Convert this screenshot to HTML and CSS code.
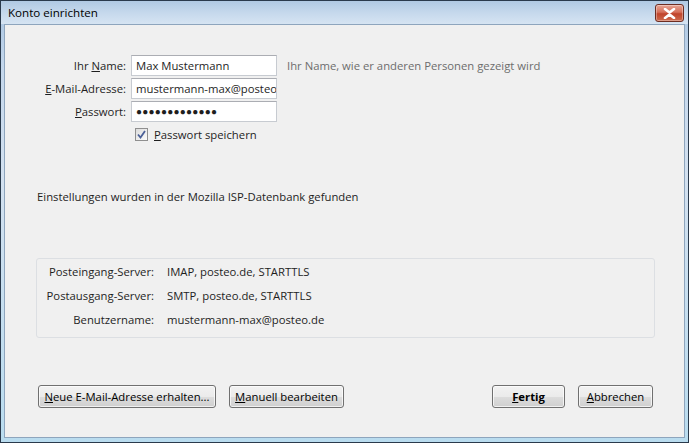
FILE: index.html
```html
<!DOCTYPE html>
<html lang="de">
<head>
<meta charset="utf-8">
<title>Konto einrichten</title>
<link rel="stylesheet" href="styles.css">
</head>
<body>
<div class="window">
  <div class="titlebar">
    <span class="title">Konto einrichten</span>
    <span class="close">
      <svg width="13" height="11" viewBox="0 0 13 11"><path d="M2 1 L6.5 4.5 L11 1 M2 10 L6.5 6.5 L11 10" stroke="#fff" stroke-width="2.6" fill="none" stroke-linecap="round"/></svg>
    </span>
  </div>
  <div class="client">
    <div class="form">
      <label class="lbl">Ihr <u>N</u>ame:</label>
      <div class="input">Max Mustermann</div>
      <span class="hint">Ihr Name, wie er anderen Personen gezeigt wird</span>

      <label class="lbl"><u>E</u>-Mail-Adresse:</label>
      <div class="input">mustermann-max@posteo.de</div>
      <span></span>

      <label class="lbl"><u>P</u>asswort:</label>
      <div class="input pw">●●●●●●●●●●●●●</div>
      <span></span>

      <span></span>
      <div class="check">
        <span class="box"><svg width="9" height="9" viewBox="0 0 9 9"><path d="M1 4.5 L3.5 7.5 L8 1" stroke="#4a5f97" stroke-width="1.8" fill="none"/></svg></span>
        <span><u>P</u>asswort speichern</span>
      </div>
      <span></span>
    </div>

    <p class="found">Einstellungen wurden in der Mozilla ISP-Datenbank gefunden</p>

    <div class="servers">
      <span class="slbl">Posteingang-Server:</span><span>IMAP, posteo.de, STARTTLS</span>
      <span class="slbl">Postausgang-Server:</span><span>SMTP, posteo.de, STARTTLS</span>
      <span class="slbl">Benutzername:</span><span>mustermann-max@posteo.de</span>
    </div>

    <div class="buttons">
      <div class="group">
        <button class="btn w1"><u>N</u>eue E-Mail-Adresse erhalten...</button>
        <button class="btn w2"><u>M</u>anuell bearbeiten</button>
      </div>
      <div class="group">
        <button class="btn w3 bold"><u>F</u>ertig</button>
        <button class="btn w4"><u>A</u>bbrechen</button>
      </div>
    </div>
  </div>
</div>
</body>
</html>
```

FILE: styles.css
```css
* { box-sizing: border-box; }
html, body { margin: 0; padding: 0; }
body {
  width: 689px;
  height: 443px;
  overflow: hidden;
  font-family: "Open Sans", "Noto Sans", sans-serif;
  font-size: 11.3px;
  color: #1e1e1e;
}
u { text-decoration: underline; text-underline-offset: 1px; }

.window {
  width: 689px;
  height: 443px;
  display: flex;
  flex-direction: column;
  border: 1px solid #2a3a4c;
  background: linear-gradient(180deg, #a7c3e0 0%, #c4d7ec 15%, #d3e1f0 40%, #b9dcef 100%);
}

.titlebar {
  height: 23px;
  flex: none;
  display: flex;
  align-items: center;
  justify-content: space-between;
  padding: 0 4px 0 7px;
  background: linear-gradient(180deg, #b0c9e3 0%, #c5d8ec 50%, #d6e4f2 100%);
}
.title { font-size: 11.6px; color: #000; }
.close {
  width: 29px;
  height: 18px;
  margin-top: 1px;
  border: 1px solid #6d2d22;
  border-radius: 3px;
  background: linear-gradient(180deg, #e8a595 0%, #d5705a 45%, #c0442b 55%, #cd6b4e 100%);
  display: flex;
  align-items: center;
  justify-content: center;
  box-shadow: inset 0 0 0 1px rgba(255,255,255,0.35);
}

.client {
  flex: 1;
  margin: 0 3px 4px 3px;
  background: #f0f0f0;
  border: 1px solid #8ea5bd;
  display: flex;
  flex-direction: column;
  padding: 30px 0 0 0;
}

.form {
  display: grid;
  grid-template-columns: 121px 146px auto;
  column-gap: 5px;
  row-gap: 2px;
  align-items: center;
}
.lbl { text-align: right; }
.input {
  height: 21px;
  background: #fff;
  border: 1px solid #c7cbd1;
  border-top-color: #abadb3;
  padding: 0 4px;
  line-height: 19px;
  white-space: nowrap;
  overflow: hidden;
}
.pw { font-size: 10px; letter-spacing: 0.2px; }
.hint { color: #6d6d6d; margin-left: 5px; }

.check {
  display: flex;
  align-items: center;
  gap: 6px;
  padding-left: 4px;
  margin-top: 3px;
}
.box {
  width: 13px;
  height: 13px;
  border: 1px solid #8f8f8f;
  background: linear-gradient(135deg, #dcdcdc, #fbfbfb);
  display: flex;
  align-items: center;
  justify-content: center;
}

.found {
  margin: 47px 0 0 32px;
}

.servers {
  margin: 54px 29px 0 31px;
  height: 80px;
  border: 1px solid #dcdfe3;
  border-radius: 3px;
  display: grid;
  grid-template-columns: 117px auto;
  column-gap: 13px;
  row-gap: 9px;
  align-content: start;
  padding-top: 5px;
}
.slbl { text-align: right; }

.buttons {
  margin: 47px 31px 0 33px;
  display: flex;
  justify-content: space-between;
}
.group { display: flex; gap: 13px; }
.btn {
  height: 23px;
  font: inherit;
  color: #000;
  border: 1px solid #707070;
  border-radius: 3px;
  background: linear-gradient(180deg, #f2f2f2 0%, #ebebeb 50%, #dddddd 51%, #cfcfcf 100%);
  box-shadow: inset 0 0 0 1px rgba(255,255,255,0.7);
  padding: 0;
}
.bold { font-weight: bold; }
.w1 { width: 178px; }
.w2 { width: 115px; }
.w3 { width: 73px; }
.w4 { width: 75px; }
```
